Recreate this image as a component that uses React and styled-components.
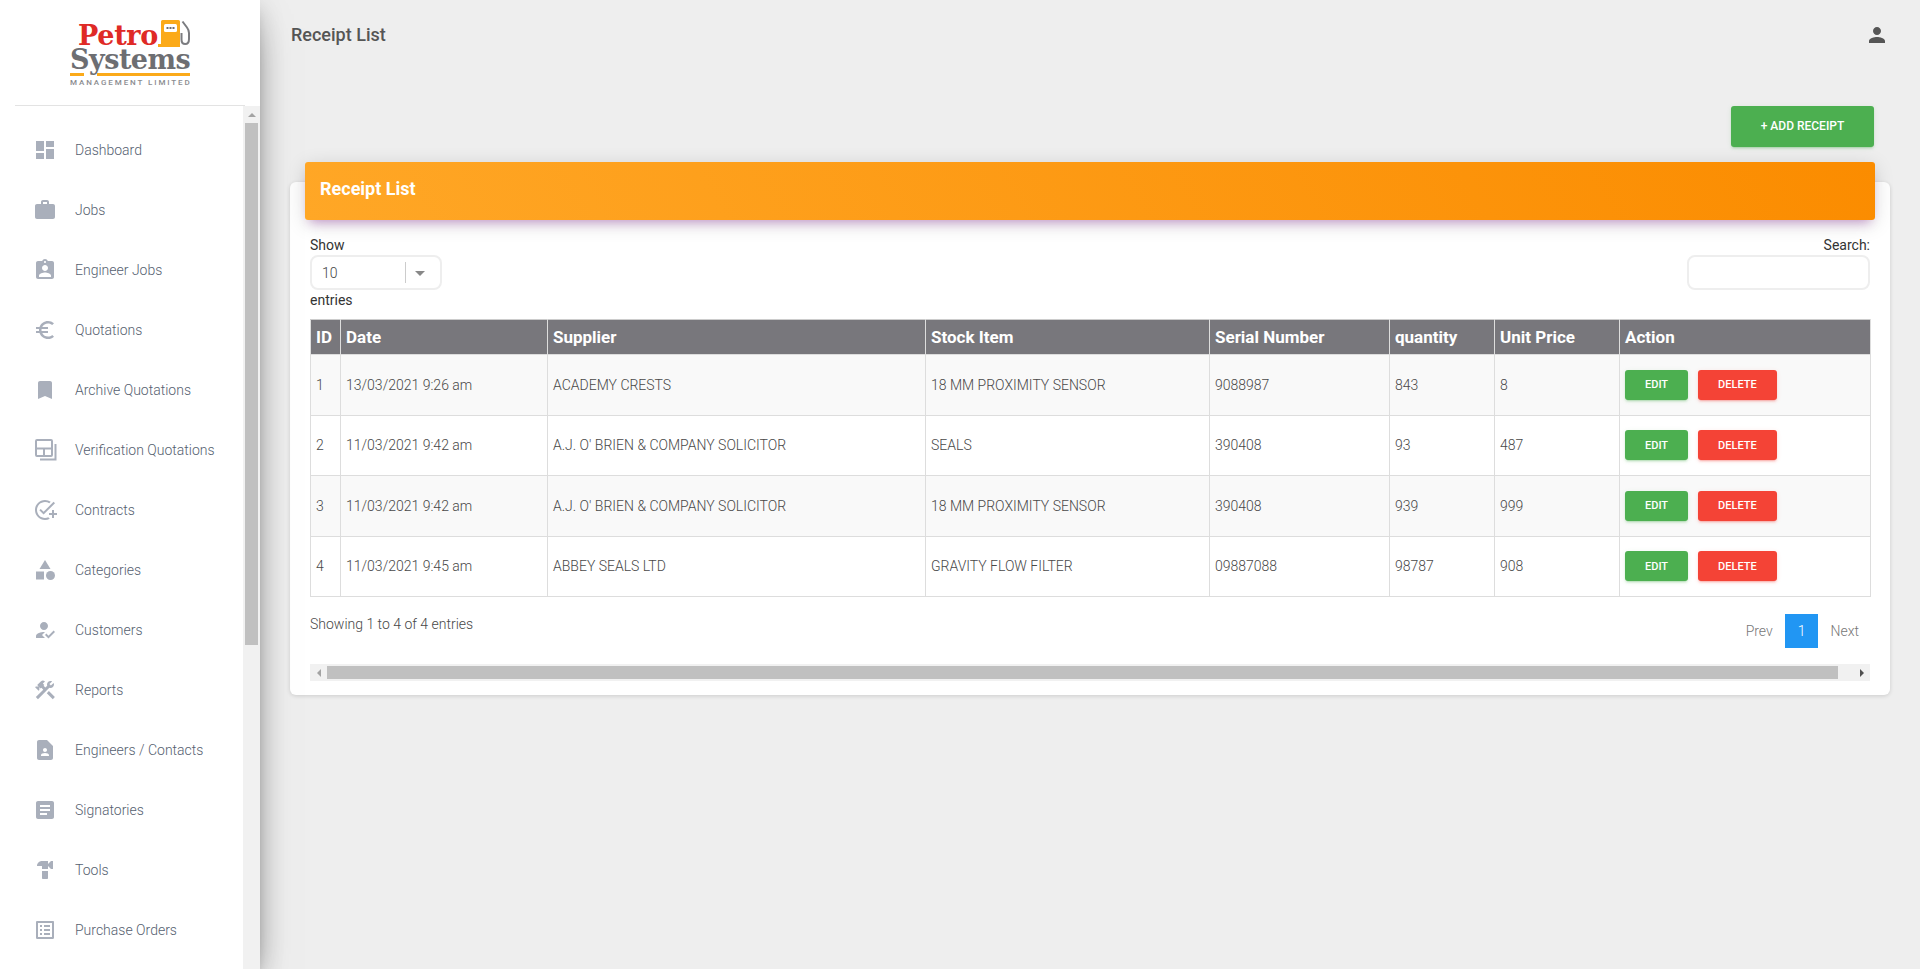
import React from 'react';
import styled, { createGlobalStyle } from 'styled-components';
import {
  MdDashboard, MdWork, MdAssignmentInd, MdEuroSymbol, MdBookmark,
  MdOutlineAddTask, MdCategory, MdHowToReg, MdConstruction, MdContactPage, MdArticle,
  MdHardware, MdOutlineListAlt, MdPerson,
} from 'react-icons/md';

const GlobalStyle = createGlobalStyle`
  html, body {
    margin: 0;
    height: 100%;
    overflow: hidden;
    background: #eee;
    font-family: Roboto, "Liberation Sans", sans-serif;
  }
  * { box-sizing: border-box; }
`;

const Page = styled.div`
  display: flex;
  height: 969px;
`;

const Sidebar = styled.aside`
  width: 260px;
  flex: none;
  height: 100%;
  display: flex;
  flex-direction: column;
  background: #fff;
  position: relative;
  z-index: 2;
  box-shadow: 0 16px 38px -12px rgba(0,0,0,.56), 0 4px 25px 0 rgba(0,0,0,.12), 0 8px 10px -5px rgba(0,0,0,.2);
`;

const LogoArea = styled.div`
  height: 106px;
  margin: 0 15px;
  flex: none;
  padding-top: 20px;
  display: flex;
  justify-content: center;
  border-bottom: 1px solid #e3e3e3;
`;

const Logo = styled.div`
  width: 120px;
  display: flex;
  flex-direction: column;
`;

const LogoTop = styled.div`
  display: flex;
  justify-content: flex-end;
  align-items: flex-start;
  height: 27px;
`;

const Petro = styled.span`
  font-family: "DejaVu Serif", serif;
  font-weight: 700;
  font-size: 27px;
  line-height: 23px;
  margin-top: 4px;
  letter-spacing: -0.3px;
  color: #df2a26;
`;

const Systems = styled.div`
  font-family: "DejaVu Serif", serif;
  font-weight: 700;
  font-size: 27px;
  line-height: 26px;
  letter-spacing: -0.5px;
  color: #6d6e72;
  white-space: nowrap;
`;

const LogoBars = styled.div`
  display: flex;
  gap: 13px;
`;

const LogoBar = styled.span`
  height: 3px;
  background: #fbaa19;
  flex: ${p => (p.$grow ? 1 : 'none')};
  width: ${p => (p.$grow ? 'auto' : '14px')};
`;

const LogoSub = styled.div`
  font-size: 8px;
  font-weight: 500;
  letter-spacing: 1.9px;
  line-height: 10px;
  color: #8b8c90;
  margin-top: 2px;
  white-space: nowrap;
`;

const SideScroll = styled.div`
  flex: 1;
  min-height: 0;
  display: flex;
`;

const NavList = styled.nav`
  flex: 1;
  overflow: hidden;
  padding-top: 14px;
`;

const NavItem = styled.a`
  height: 60px;
  display: flex;
  align-items: center;
  padding-left: 33px;
  gap: 18px;
  color: #566170;
  font-size: 14px;
  font-weight: 300;
  white-space: nowrap;

  svg {
    width: 24px;
    height: 24px;
    color: #a9afbb;
    flex: none;
  }
`;

const VTrack = styled.div`
  width: 17px;
  flex: none;
  display: flex;
  flex-direction: column;
  align-items: center;
  background: #f1f1f1;
`;

const VArrow = styled.div`
  height: 17px;
  flex: none;
  display: flex;
  align-items: center;
  justify-content: center;

  &::before {
    content: '';
    border-left: 4px solid transparent;
    border-right: 4px solid transparent;
    border-bottom: 4px solid #a3a3a3;
  }
`;

const VThumb = styled.div`
  width: 13px;
  height: 522px;
  flex: none;
  background: #c0c0c0;
`;

const Main = styled.main`
  flex: 1;
  min-width: 0;
  padding: 0 30px;
  display: flex;
  flex-direction: column;
`;

const TopBar = styled.header`
  height: 70px;
  flex: none;
  display: flex;
  align-items: center;
  justify-content: space-between;
  padding: 0 1px;
  color: #555;

  svg {
    width: 24px;
    height: 24px;
    color: #555;
  }
`;

const PageTitle = styled.h1`
  margin: 0;
  font-size: 18px;
  line-height: 30px;
  font-weight: 500;
  color: #555;
`;

const Toolbar = styled.div`
  display: flex;
  justify-content: flex-end;
  padding: 36px 16px 0 0;
  flex: none;
`;

const Button = styled.button`
  border: 0;
  border-radius: 3px;
  color: #fff;
  font-family: inherit;
  font-weight: 500;
  text-transform: uppercase;
  background: ${p => (p.$kind === 'danger' ? '#f44336' : '#4caf50')};
  box-shadow: 0 2px 2px 0 ${p => (p.$kind === 'danger' ? 'rgba(244,67,54,.14)' : 'rgba(76,175,80,.14)')},
    0 3px 1px -2px ${p => (p.$kind === 'danger' ? 'rgba(244,67,54,.2)' : 'rgba(76,175,80,.2)')},
    0 1px 5px 0 ${p => (p.$kind === 'danger' ? 'rgba(244,67,54,.12)' : 'rgba(76,175,80,.12)')};
`;

const AddButton = styled(Button)`
  width: 143px;
  height: 41px;
  padding-bottom: 2px;
  font-size: 12px;
`;

const RowButton = styled(Button)`
  height: 30px;
  padding: 0 20px;
  font-size: 11px;
`;

const Card = styled.section`
  margin-top: 35px;
  height: 513px;
  background: #fff;
  border-radius: 6px;
  padding: 0 20px;
  box-shadow: 0 1px 4px 0 rgba(0,0,0,.14);
`;

const CardHeader = styled.div`
  height: 58px;
  margin: -20px -5px 0;
  padding: 0 15px 5px;
  display: flex;
  align-items: center;
  border-radius: 3px;
  color: #fff;
  font-size: 18px;
  font-weight: 700;
  background: linear-gradient(60deg, #ffa726, #fb8c00);
  box-shadow: 0 4px 20px 0 rgba(0,0,0,.14), 0 7px 10px -5px rgba(156,39,176,.4);
`;

const Filters = styled.div`
  display: flex;
  justify-content: space-between;
  align-items: flex-start;
  margin-top: 15px;
  height: 84px;
  font-size: 14px;
  line-height: 20px;
  font-weight: 400;
  color: #333;
`;

const FilterGroup = styled.div`
  display: flex;
  flex-direction: column;
  align-items: ${p => (p.$end ? 'flex-end' : 'flex-start')};
`;

const Select = styled.div`
  width: 132px;
  height: 35px;
  border: 2px solid #eee;
  border-radius: 8px;
  display: flex;
  align-items: center;
  padding-left: 10px;
  font-weight: 300;
  color: #444;
`;

const SelectValue = styled.span`
  flex: 1;
`;

const SelectCaret = styled.span`
  width: 35px;
  height: 21px;
  padding-left: 9px;
  border-left: 1px solid #ccc;
  display: flex;
  align-items: center;

  &::before {
    content: '';
    border-left: 5px solid transparent;
    border-right: 5px solid transparent;
    border-top: 5px solid #888;
    margin-top: 2px;
  }
`;

const SearchBox = styled.div`
  width: 183px;
  height: 35px;
  border: 2px solid #eee;
  border-radius: 8px;
`;

const Table = styled.table`
  width: 100%;
  table-layout: fixed;
  border-collapse: collapse;
  font-size: 14px;
`;

const Th = styled.th`
  width: ${p => p.$w}px;
  height: 35px;
  padding: 0 4px 0 5px;
  text-align: left;
  font-size: 17px;
  font-weight: 700;
  color: #fff;
  background: #78777c;
  border: 1px solid #ddd;
  border-top-color: #ccc;
`;

const Tr = styled.tr`
  background: ${p => (p.$odd ? '#f9f9f9' : '#fff')};
`;

const Td = styled.td`
  height: 60.5px;
  padding: 0 4px 0 5px;
  font-weight: 300;
  color: #484848;
  border: 1px solid #ddd;
  white-space: nowrap;
`;

const Actions = styled.div`
  display: flex;
  gap: 10px;
`;

const Footer = styled.div`
  display: flex;
  justify-content: space-between;
  align-items: flex-start;
  height: 67px;
  padding-top: 17px;
`;

const Info = styled.div`
  font-size: 14px;
  font-weight: 300;
  line-height: 20px;
  color: #484848;
`;

const Pager = styled.div`
  display: flex;
  align-items: center;
  font-size: 14px;
  font-weight: 300;
`;

const PageLink = styled.span`
  height: 34px;
  display: flex;
  align-items: center;
  justify-content: center;
  padding: 0 ${p => (p.$active ? '13px' : '12px')};
  color: ${p => (p.$active ? '#fff' : '#777')};
  background: ${p => (p.$active ? '#2196f3' : 'transparent')};

  &:last-child {
    padding-right: 11px;
  }
`;

const HScroll = styled.div`
  height: 17px;
  display: flex;
  align-items: center;
  background: #f1f1f1;
`;

const HArrow = styled.div`
  width: 17px;
  flex: none;
  display: flex;
  justify-content: center;

  &::before {
    content: '';
    border-top: 4px solid transparent;
    border-bottom: 4px solid transparent;
    ${p => (p.$right ? 'border-left: 4px solid #505050;' : 'border-right: 4px solid #a3a3a3;')}
  }
`;

const HThumb = styled.div`
  height: 13px;
  width: 1511px;
  flex: none;
  background: #c0c0c0;
`;

const HSpacer = styled.div`
  flex: 1;
`;

// framed panes with an offset L behind them, no package icon has this shape
function PanesIcon() {
  return (
    <svg viewBox="0 0 24 24" fill="none" stroke="currentColor" strokeWidth="2">
      <rect x="3" y="2" width="16" height="16" rx="1" />
      <path d="M3 10.500h16M11 10.500V18M22.500 6v15.500H7" />
    </svg>
  );
}

function PumpIcon() {
  return (
    <svg width="32" height="27" viewBox="0 0 32 27">
      <path d="M3 1.500A1.500 1.500 0 0 1 4.500 0h16A1.500 1.500 0 0 1 22 1.500V24h0v3H0v-3h3z" fill="#fbaa19" />
      <rect x="6" y="4" width="13" height="8" rx="1.500" fill="#fff" />
      <path d="M8.500 7h2v2h-2zM11.500 7h2v2h-2zM14.500 7h2v2h-2z" fill="#6d6e72" />
      <path d="M24.500 1.500l4.500 6c1.500 2 2 3 2 5.500v6c0 3-1.500 5-3.800 5s-3.700-2-3.700-4.500V13" fill="none" stroke="#7b7c80" strokeWidth="2" />
    </svg>
  );
}

const navItems = [
  [MdDashboard, 'Dashboard'],
  [MdWork, 'Jobs'],
  [MdAssignmentInd, 'Engineer Jobs'],
  [MdEuroSymbol, 'Quotations'],
  [MdBookmark, 'Archive Quotations'],
  [PanesIcon, 'Verification Quotations'],
  [MdOutlineAddTask, 'Contracts'],
  [MdCategory, 'Categories'],
  [MdHowToReg, 'Customers'],
  [MdConstruction, 'Reports'],
  [MdContactPage, 'Engineers / Contacts'],
  [MdArticle, 'Signatories'],
  [MdHardware, 'Tools'],
  [MdOutlineListAlt, 'Purchase Orders'],
];

const columns = [
  ['ID', 30], ['Date', 207], ['Supplier', 378], ['Stock Item', 284],
  ['Serial Number', 180], ['quantity', 105], ['Unit Price', 125], ['Action', 251],
];

const receipts = [
  ['1', '13/03/2021 9:26 am', 'ACADEMY CRESTS', '18 MM PROXIMITY SENSOR', '9088987', '843', '8'],
  ['2', '11/03/2021 9:42 am', "A.J. O' BRIEN & COMPANY SOLICITOR", 'SEALS', '390408', '93', '487'],
  ['3', '11/03/2021 9:42 am', "A.J. O' BRIEN & COMPANY SOLICITOR", '18 MM PROXIMITY SENSOR', '390408', '939', '999'],
  ['4', '11/03/2021 9:45 am', 'ABBEY SEALS LTD', 'GRAVITY FLOW FILTER', '09887088', '98787', '908'],
];

export default function App() {
  return (
    <Page>
      <GlobalStyle />
      <Sidebar>
        <LogoArea>
          <Logo>
            <LogoTop>
              <Petro>Petro</Petro>
              <PumpIcon />
            </LogoTop>
            <Systems>Systems</Systems>
            <LogoBars>
              <LogoBar />
              <LogoBar $grow />
            </LogoBars>
            <LogoSub>MANAGEMENT LIMITED</LogoSub>
          </Logo>
        </LogoArea>
        <SideScroll>
          <NavList>
            {navItems.map(([Icon, label]) => (
              <NavItem key={label}>
                <Icon />
                {label}
              </NavItem>
            ))}
          </NavList>
          <VTrack>
            <VArrow />
            <VThumb />
          </VTrack>
        </SideScroll>
      </Sidebar>

      <Main>
        <TopBar>
          <PageTitle>Receipt List</PageTitle>
          <MdPerson />
        </TopBar>
        <Toolbar>
          <AddButton>+ Add Receipt</AddButton>
        </Toolbar>
        <Card>
          <CardHeader>Receipt List</CardHeader>
          <Filters>
            <FilterGroup>
              Show
              <Select>
                <SelectValue>10</SelectValue>
                <SelectCaret />
              </Select>
              entries
            </FilterGroup>
            <FilterGroup $end>
              Search:
              <SearchBox />
            </FilterGroup>
          </Filters>
          <Table>
            <thead>
              <tr>
                {columns.map(([name, w]) => <Th key={name} $w={w}>{name}</Th>)}
              </tr>
            </thead>
            <tbody>
              {receipts.map((row, i) => (
                <Tr key={row[0]} $odd={i % 2 === 0}>
                  {row.map((cell, j) => <Td key={j}>{cell}</Td>)}
                  <Td>
                    <Actions>
                      <RowButton>Edit</RowButton>
                      <RowButton $kind="danger">Delete</RowButton>
                    </Actions>
                  </Td>
                </Tr>
              ))}
            </tbody>
          </Table>
          <Footer>
            <Info>Showing 1 to 4 of 4 entries</Info>
            <Pager>
              <PageLink>Prev</PageLink>
              <PageLink $active>1</PageLink>
              <PageLink>Next</PageLink>
            </Pager>
          </Footer>
          <HScroll>
            <HArrow />
            <HThumb />
            <HSpacer />
            <HArrow $right />
          </HScroll>
        </Card>
      </Main>
    </Page>
  );
}
